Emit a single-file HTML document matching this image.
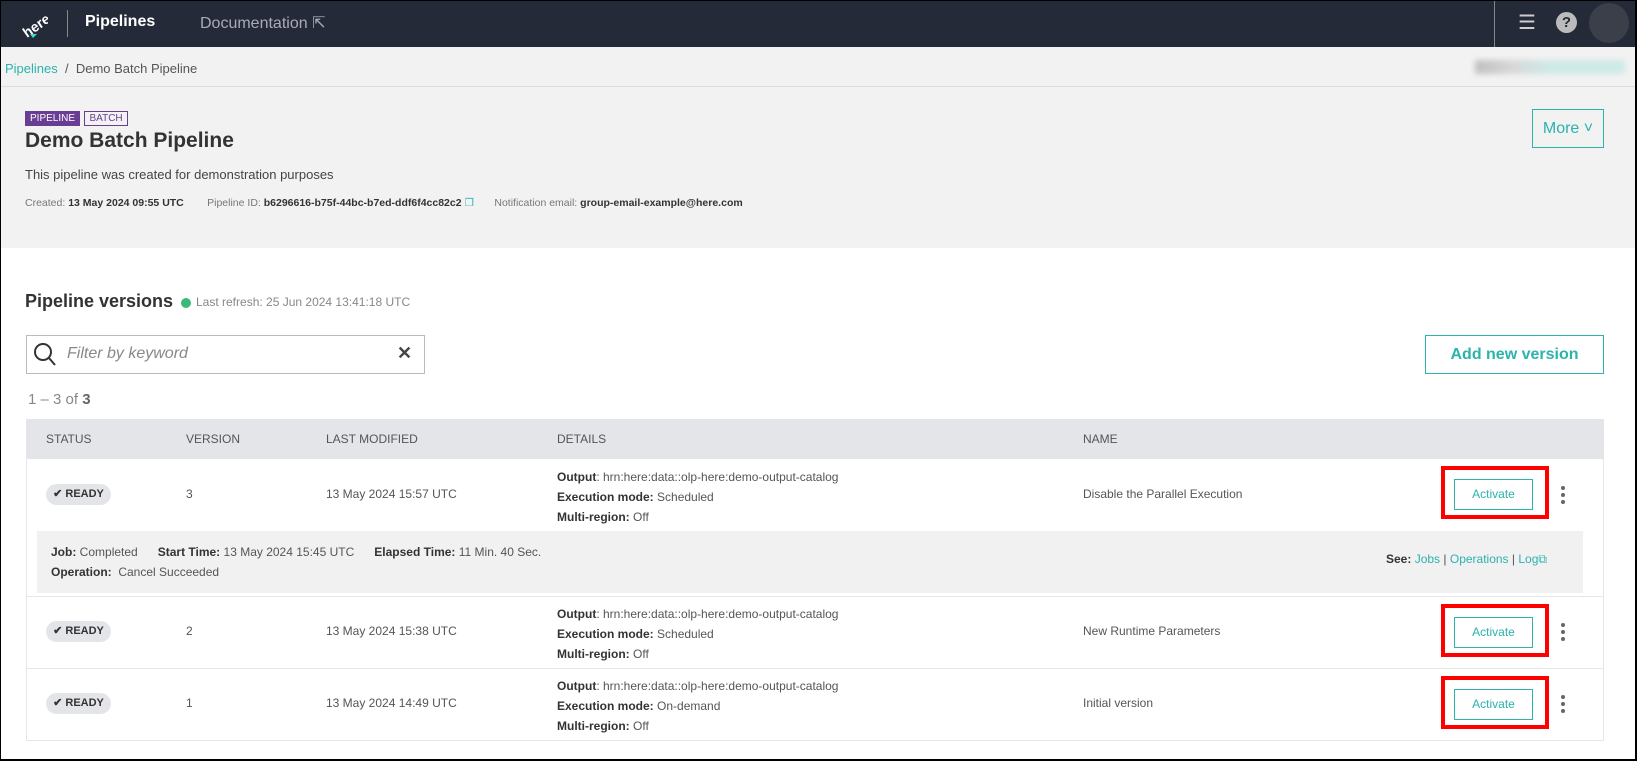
<!DOCTYPE html>
<html><head><meta charset="utf-8"><style>
*{box-sizing:border-box;margin:0;padding:0}
body{width:1637px;height:761px;overflow:hidden;font-family:"Liberation Sans",sans-serif;background:#fff;position:relative;color:#48484a}
.abs{position:absolute;white-space:nowrap}
.frame{position:absolute;left:0;top:0;width:1637px;height:761px;border:1px solid #000;border-right:2px solid #000;border-bottom:2px solid #000;pointer-events:none;z-index:10}
.hdr{position:absolute;left:0;top:0;width:1637px;height:47px;background:#242a37}
.gray{position:absolute;left:0;top:47px;width:1637px;height:201px;background:#f2f2f2}
.teal{color:#2bb3ac}
.tag{display:inline-block;font-size:10px;padding:1px 4px;border:1px solid #6a3d95;color:#6a3d95}
.th{font-size:12px;color:#555;top:432px}
.cell{font-size:12px;color:#555}
.badge{position:absolute;left:46px;width:65px;height:21px;border-radius:11px;background:#e4e5e8;font-size:11px;font-weight:bold;color:#333;text-align:center;line-height:21px}
.btn{position:absolute;left:1454px;width:79px;height:31px;border:1px solid #2bb3ac;color:#2bb3ac;font-size:12px;text-align:center;line-height:29px;background:#fff}
.red{position:absolute;left:1441px;width:108px;height:53px;border:4px solid #f00}
.keb{position:absolute;left:1561px;width:4px}
.keb i{display:block;width:4px;height:4px;border-radius:2px;background:#666;margin-bottom:3px}
b{color:#333}
</style></head><body>
<div class="hdr"></div>
<svg class="abs" style="left:18px;top:10px" width="30" height="28"><text x="2" y="22" transform="rotate(-35 15 14)" font-family="Liberation Sans" font-weight="bold" font-size="14" fill="#fff">here</text><polygon points="12,24 19,24 15,28" fill="#48dad0"/></svg>
<div class="abs" style="left:67px;top:10px;width:1px;height:27px;background:#888"></div>
<div class="abs" style="left:85px;top:13px;font-size:16px;font-weight:bold;color:#fff">Pipelines</div>
<div class="abs" style="left:200px;top:13px;font-size:16px;color:#aab">Documentation ⇱</div>
<div class="abs" style="left:1494px;top:0;width:1px;height:47px;background:#888"></div>
<div class="abs" style="left:1518px;top:10px;font-size:20px;color:#ccc">☰</div>
<div class="abs" style="left:1556px;top:12px;width:21px;height:21px;border-radius:50%;background:#bbb;color:#242a37;font-weight:bold;font-size:15px;text-align:center;line-height:21px">?</div>
<div class="abs" style="left:1589px;top:3px;width:40px;height:40px;border-radius:50%;background:#3a3f4a"></div>
<div class="gray"></div>
<div class="abs" style="left:0;top:86px;width:1637px;height:1px;background:#ddd"></div>
<div class="abs" style="left:5px;top:61px;font-size:13px;color:#555"><span class="teal">Pipelines</span> &nbsp;/&nbsp; Demo Batch Pipeline</div>
<div class="abs" style="left:1475px;top:60px;width:150px;height:14px;background:linear-gradient(90deg,#aaa 0,#ccc 25%,#bfe6e3 50%,#bfe6e3 100%);filter:blur(3px);opacity:.7"></div>
<div class="abs" style="left:25px;top:108px"><span class="tag" style="background:#6a3d95;color:#fff">PIPELINE</span> <span class="tag">BATCH</span></div>
<div class="abs" style="left:25px;top:129px;font-size:21px;font-weight:bold;color:#333">Demo Batch Pipeline</div>
<div class="abs" style="left:25px;top:167px;font-size:13px;color:#444">This pipeline was created for demonstration purposes</div>
<div class="abs" style="left:25px;top:197px;font-size:10.5px;color:#777">Created: <b>13 May 2024 09:55 UTC</b> &nbsp; &nbsp; &nbsp; &nbsp;Pipeline ID: <b>b6296616-b75f-44bc-b7ed-ddf6f4cc82c2</b> <span class="teal">❐</span> &nbsp; &nbsp; &nbsp; Notification email: <b>group-email-example@here.com</b></div>
<div class="abs" style="left:1532px;top:109px;width:72px;height:39px;border:1px solid #2bb3ac;color:#2bb3ac;font-size:16px;text-align:center;line-height:37px">More ˅</div>
<div class="abs" style="left:25px;top:291px;font-size:18px;font-weight:bold;color:#333">Pipeline versions</div>
<div class="abs" style="left:181px;top:298px;width:10px;height:10px;border-radius:50%;background:#3cb878"></div>
<div class="abs" style="left:196px;top:295px;font-size:12px;color:#888">Last refresh: 25 Jun 2024 13:41:18 UTC</div>
<div class="abs" style="left:26px;top:335px;width:399px;height:39px;border:1px solid #bbb"></div>
<svg class="abs" style="left:33px;top:342px" width="24" height="26"><circle cx="10" cy="10" r="8" fill="none" stroke="#333" stroke-width="2"/><line x1="16" y1="16" x2="22" y2="23" stroke="#333" stroke-width="2"/></svg>
<div class="abs" style="left:67px;top:345px;font-size:16px;font-style:italic;color:#888">Filter by keyword</div>
<div class="abs" style="left:397px;top:343px;font-size:18px;font-weight:bold;color:#444">✕</div>
<div class="abs" style="left:1425px;top:335px;width:179px;height:39px;border:1px solid #2bb3ac;color:#2bb3ac;font-size:16px;font-weight:bold;text-align:center;line-height:37px">Add new version</div>
<div class="abs" style="left:28px;top:391px;font-size:15px;color:#888">1 – 3 of <b style="color:#666">3</b></div>
<div class="abs" style="left:26px;top:419px;width:1578px;height:40px;background:#e4e5e8"></div>
<div class="abs th" style="left:46px">STATUS</div><div class="abs th" style="left:186px">VERSION</div><div class="abs th" style="left:326px">LAST MODIFIED</div><div class="abs th" style="left:557px">DETAILS</div><div class="abs th" style="left:1083px">NAME</div>
<div class="abs" style="left:26px;top:459px;width:1578px;height:282px;border:1px solid #e6e6e6;border-top:none"></div>
<div class="abs" style="left:37px;top:531px;width:1546px;height:62px;background:#f1f1f1"></div>
<div class="abs" style="left:26px;top:596px;width:1578px;height:1px;background:#e6e6e6"></div>
<div class="abs" style="left:26px;top:668px;width:1578px;height:1px;background:#e6e6e6"></div>
<div class="badge" style="top:484px">✔ READY</div><div class="badge" style="top:621px">✔ READY</div><div class="badge" style="top:693px">✔ READY</div>
<div class="abs cell" style="left:186px;top:487px">3</div><div class="abs cell" style="left:186px;top:624px">2</div><div class="abs cell" style="left:186px;top:696px">1</div>
<div class="abs cell" style="left:326px;top:487px">13 May 2024 15:57 UTC</div><div class="abs cell" style="left:326px;top:624px">13 May 2024 15:38 UTC</div><div class="abs cell" style="left:326px;top:696px">13 May 2024 14:49 UTC</div>
<div class="abs cell" style="left:557px;top:467px;line-height:20px"><b>Output</b>: hrn:here:data::olp-here:demo-output-catalog<br><b>Execution mode:</b> Scheduled<br><b>Multi-region:</b> Off</div>
<div class="abs cell" style="left:557px;top:604px;line-height:20px"><b>Output</b>: hrn:here:data::olp-here:demo-output-catalog<br><b>Execution mode:</b> Scheduled<br><b>Multi-region:</b> Off</div>
<div class="abs cell" style="left:557px;top:676px;line-height:20px"><b>Output</b>: hrn:here:data::olp-here:demo-output-catalog<br><b>Execution mode:</b> On-demand<br><b>Multi-region:</b> Off</div>
<div class="abs cell" style="left:1083px;top:487px">Disable the Parallel Execution</div><div class="abs cell" style="left:1083px;top:624px">New Runtime Parameters</div><div class="abs cell" style="left:1083px;top:696px">Initial version</div>
<div class="abs cell" style="left:51px;top:542px;line-height:20px"><b>Job:</b> Completed &nbsp; &nbsp; &nbsp;<b>Start Time:</b> 13 May 2024 15:45 UTC &nbsp; &nbsp; &nbsp;<b>Elapsed Time:</b> 11 Min. 40 Sec.<br><b>Operation:</b> &nbsp;Cancel Succeeded</div>
<div class="abs cell" style="left:1386px;top:552px"><b>See:</b> <span class="teal">Jobs</span> | <span class="teal">Operations</span> | <span class="teal">Log⧉</span></div>
<div class="red" style="top:466px"></div><div class="btn" style="top:479px">Activate</div>
<div class="red" style="top:604px"></div><div class="btn" style="top:617px">Activate</div>
<div class="red" style="top:676px"></div><div class="btn" style="top:689px">Activate</div>
<div class="keb" style="top:486px"><i></i><i></i><i></i></div>
<div class="keb" style="top:623px"><i></i><i></i><i></i></div>
<div class="keb" style="top:695px"><i></i><i></i><i></i></div>
<div class="frame"></div>
</body></html>
